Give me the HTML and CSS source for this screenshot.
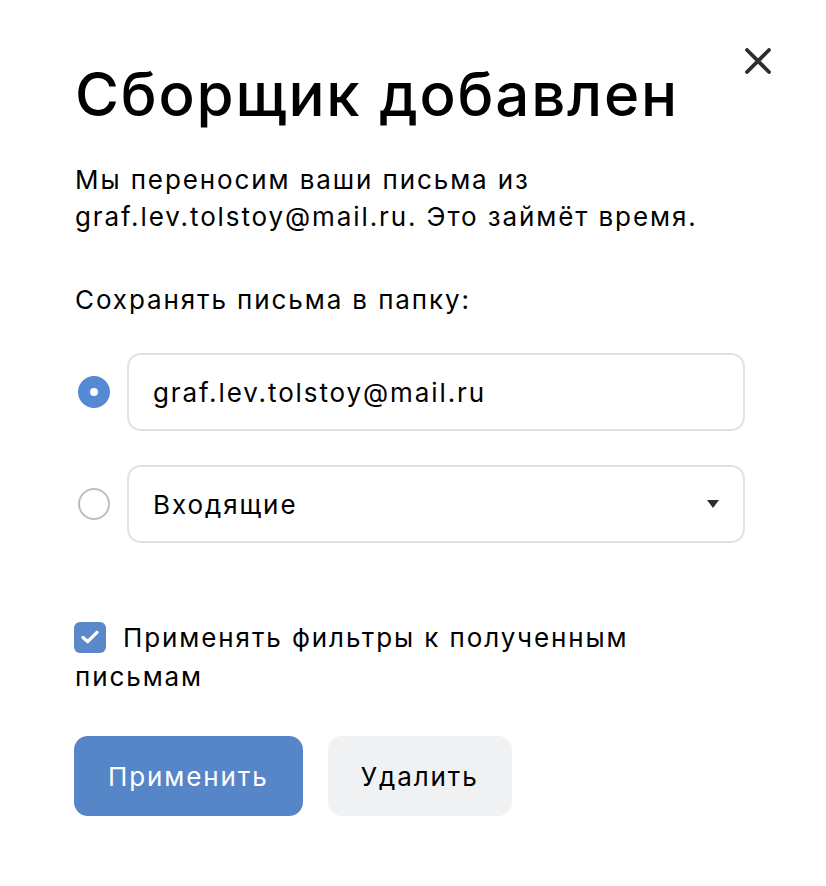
FILE: index.html
```html
<!DOCTYPE html>
<html lang="ru">
<head>
  <meta charset="UTF-8">
  <meta name="viewport" content="width=device-width, initial-scale=1.0">
  <title>Сборщик добавлен</title>
  <link rel="stylesheet" href="styles.css">
</head>
<body>
  <div class="modal">
    <button class="close" type="button" aria-label="Закрыть">
      <svg width="26" height="26" viewBox="0 0 26 26">
        <path d="M2 2 L24 24 M24 2 L2 24" stroke="#2c2d2e" stroke-width="3.8" stroke-linecap="round"/>
      </svg>
    </button>

    <h1>Сборщик добавлен</h1>

    <p class="text">Мы переносим ваши письма из graf.lev.tolstoy@mail.ru. Это займёт время.</p>

    <p class="label">Сохранять письма в папку:</p>

    <div class="options">
      <label class="option">
        <span class="radio checked"></span>
        <span class="field">graf.lev.tolstoy@mail.ru</span>
      </label>
      <label class="option">
        <span class="radio"></span>
        <span class="field select">Входящие <i class="arrow"></i></span>
      </label>
    </div>

    <p class="filters">
      <span class="checkbox">
        <svg width="20" height="16" viewBox="0 0 20 16">
          <path d="M3 8.5 L7.6 12.6 L17 3.4" fill="none" stroke="#fff" stroke-width="3.4" stroke-linecap="round" stroke-linejoin="round"/>
        </svg>
      </span>Применять фильтры к полученным письмам
    </p>

    <div class="buttons">
      <button class="btn primary" type="button">Применить</button>
      <button class="btn" type="button">Удалить</button>
    </div>
  </div>
</body>
</html>
```

FILE: styles.css
```css
* {
  margin: 0;
  padding: 0;
  box-sizing: border-box;
}

body {
  background: #fff;
  color: #000;
  font-family: Inter, "Noto Sans", sans-serif;
  font-size: 26px;
  letter-spacing: 1.9px;
}

.modal {
  position: relative;
  width: 826px;
  padding: 58px 81px 40px 75px;
}

.close {
  position: absolute;
  top: 48px;
  right: 55px;
  width: 26px;
  height: 26px;
  border: none;
  background: none;
  cursor: pointer;
}

.close svg {
  display: block;
}

h1 {
  font-weight: 500;
  font-size: 60px;
  line-height: 72px;
  letter-spacing: 1.8px;
}

.text {
  margin-top: 31px;
  line-height: 37px;
  max-width: 660px;
}

.label {
  margin-top: 46px;
  line-height: 37px;
}

.options {
  margin-top: 35px;
  display: flex;
  flex-direction: column;
  gap: 34px;
}

.option {
  display: flex;
  align-items: center;
  gap: 17px;
}

.radio {
  flex: none;
  width: 32px;
  height: 32px;
  margin-left: 3px;
  border-radius: 50%;
  border: 2px solid #b9bec7;
}

.radio.checked {
  border: 12px solid #5589d4;
  background: #fff;
}

.field {
  flex: 1;
  height: 78px;
  display: flex;
  align-items: center;
  padding: 0 24px;
  border: 2px solid #e0e1e4;
  border-radius: 14px;
}

.select {
  justify-content: space-between;
}

.arrow {
  width: 0;
  height: 0;
  border-left: 6px solid transparent;
  border-right: 6px solid transparent;
  border-top: 8px solid #2c2d2e;
}

.filters {
  margin-top: 75px;
  line-height: 39px;
  max-width: 640px;
}

.checkbox {
  display: inline-flex;
  align-items: center;
  justify-content: center;
  width: 32px;
  height: 31px;
  margin-left: -1px;
  margin-right: 17px;
  vertical-align: 2px;
  border-radius: 6px;
  background: #5a88c8;
}

.checkbox svg {
  display: block;
}

.buttons {
  margin-top: 40px;
  display: flex;
  gap: 25px;
  margin-left: -1px;
}

.btn {
  height: 80px;
  padding: 0 33px;
  border: none;
  border-radius: 14px;
  background: #f0f1f3;
  color: #000;
  font-family: Inter, "Noto Sans", sans-serif;
  font-size: 26px;
  letter-spacing: 1.9px;
  cursor: pointer;
}

.btn.primary {
  padding: 0 34px;
  background: #5786c8;
  color: #fff;
}
```
